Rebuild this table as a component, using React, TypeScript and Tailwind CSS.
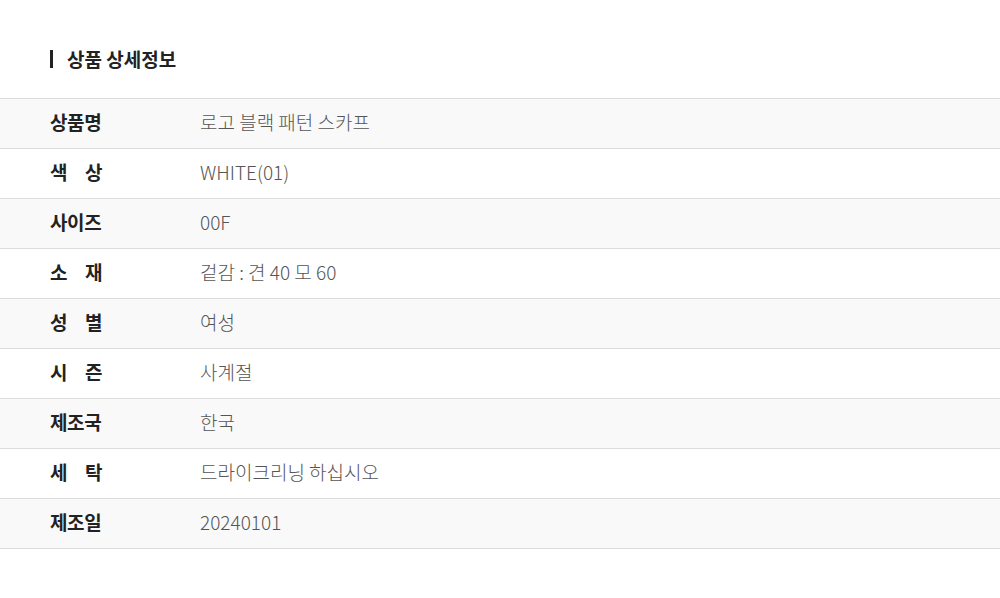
const rows: [string, string][] = [
  ["상품명", "로고 블랙 패턴 스카프"],
  ["색상", "WHITE(01)"],
  ["사이즈", "00F"],
  ["소재", "겉감 : 견 40 모 60"],
  ["성별", "여성"],
  ["시즌", "사계절"],
  ["제조국", "한국"],
  ["세탁", "드라이크리닝 하십시오"],
  ["제조일", "20240101"],
];

function Label({ text }: { text: string }) {
  if (text.length === 2) {
    return (
      <span className="flex w-[52px] justify-between">
        <span>{text[0]}</span>
        <span>{text[1]}</span>
      </span>
    );
  }
  return <span>{text}</span>;
}

export default function App() {
  return (
    <div
      className="min-h-[598px] w-[1000px] bg-white pt-[46px]"
      style={{ fontFamily: '"Noto Sans CJK KR", "Noto Sans", sans-serif' }}
    >
      <div className="flex items-center gap-[14px] pl-[50px]">
        <span className="h-[18px] w-[3px] bg-[#222]" />
        <h2 className="text-[19px] font-bold leading-[26px] text-[#222]">상품 상세정보</h2>
      </div>
      <div className="mt-[26px] border-t border-[#dcdcdc]">
        {rows.map(([k, v], i) => (
          <div
            key={k}
            className={`flex h-[50px] items-center border-b border-[#dcdcdc] pb-[3px] ${i % 2 === 0 ? "bg-[#f9f9f9]" : "bg-white"}`}
          >
            <div className="w-[200px] shrink-0 pl-[50px] text-[19px] font-bold tracking-[-0.4px] text-[#222]">
              <Label text={k} />
            </div>
            <div className="text-[19px] font-light text-[#555]">{v}</div>
          </div>
        ))}
      </div>
    </div>
  );
}
